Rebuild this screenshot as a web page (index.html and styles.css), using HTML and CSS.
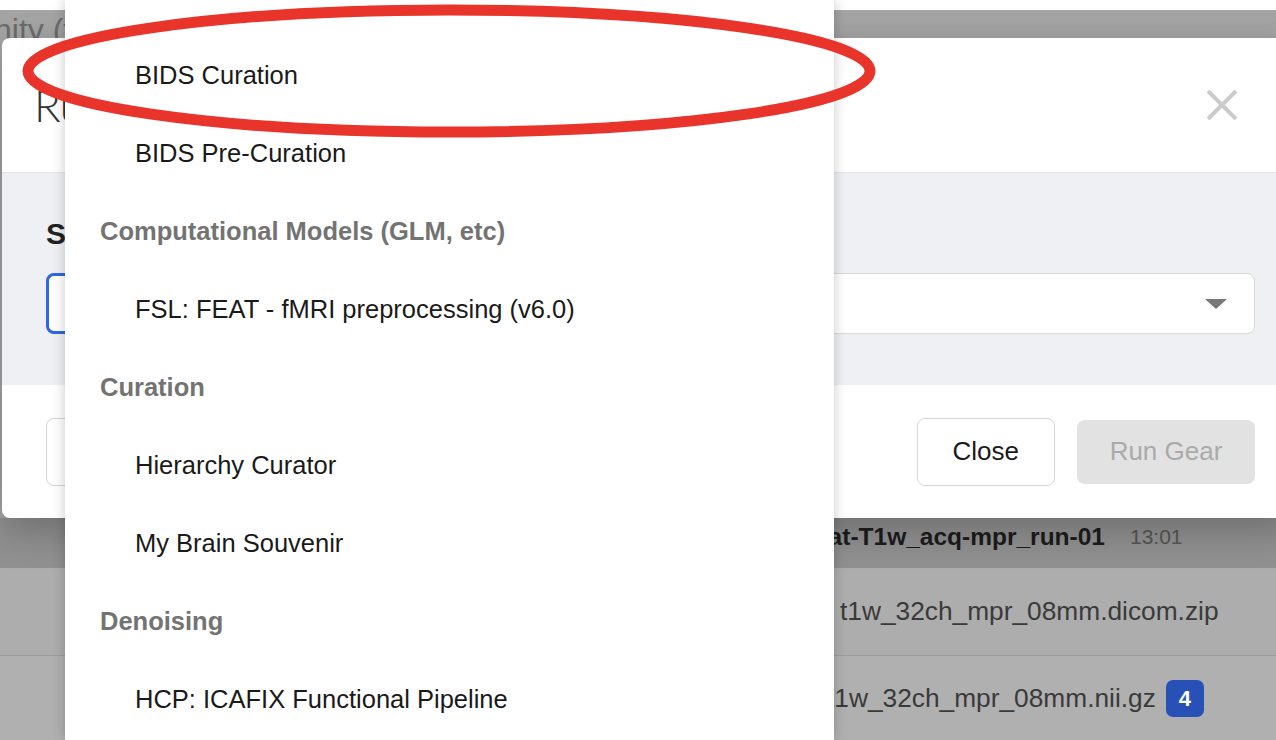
FILE: index.html
```html
<!DOCTYPE html>
<html lang="en">
<head>
  <meta charset="UTF-8" />
  <title>Run Gear</title>
  <link rel="stylesheet" href="styles.css">
</head>
<body>

  <!-- page derrière la modale -->
  <div class="page">
    <h2 class="page-title">Community (t1w)</h2>
    <div class="files">
      <div class="file-row row-acq">
        <span class="acq-name">anat-T1w_acq-mpr_run-01</span>
        <span class="acq-time">13:01</span>
      </div>
      <div class="file-row row-dicom">t1w_32ch_mpr_08mm.dicom.zip</div>
      <div class="file-row row-nifti">
        <span>t1w_32ch_mpr_08mm.nii.gz</span>
        <span class="badge">4</span>
      </div>
    </div>
  </div>

  <div class="modal">
    <div class="modal-header">
      <h3 class="modal-title">Run Gear</h3>
      <button class="modal-close" aria-label="Close">
        <svg width="32" height="30" viewBox="0 0 32 30">
          <path d="M2 1 L30 29 M30 1 L2 29" stroke="#cbcbcb" stroke-width="4" fill="none" />
        </svg>
      </button>
    </div>
    <div class="modal-body">
      <label class="field-label">Select a Gear</label>
      <div class="select">
        <div class="select-search"></div>
        <span class="select-arrow"></span>
      </div>
    </div>
    <div class="modal-footer">
      <button class="btn btn-left">Advanced</button>
      <div class="spacer"></div>
      <button class="btn">Close</button>
      <button class="btn btn-disabled" disabled>Run Gear</button>
    </div>
  </div>

  <ul class="dropdown">
    <li class="opt">BIDS Curation</li>
    <li class="opt">BIDS Pre-Curation</li>
    <li class="group">Computational Models (GLM, etc)</li>
    <li class="opt">FSL: FEAT - fMRI preprocessing (v6.0)</li>
    <li class="group">Curation</li>
    <li class="opt">Hierarchy Curator</li>
    <li class="opt">My Brain Souvenir</li>
    <li class="group">Denoising</li>
    <li class="opt">HCP: ICAFIX Functional Pipeline</li>
  </ul>

  <!-- annotation rouge -->
  <svg class="annotation" width="900" height="150" viewBox="0 0 900 150">
    <ellipse cx="449" cy="71" rx="421" ry="61" fill="none" stroke="#e8342a" stroke-width="11" />
  </svg>

</body>
</html>
```

FILE: styles.css
```css
body {
  margin: 0;
  height: 740px;
  overflow: hidden;
  position: relative;
  background: #ffffff;
  font-family: "Liberation Sans", Arial, sans-serif;
  color: #1a1a1a;
}

/* page grisée derrière */
.page {
  margin-top: 10px;
  height: 730px;
  background: #a5a5a5;
}

.page-title {
  margin: 0 0 0 -118px;
  height: 40px;
  line-height: 40px;
  font-size: 32px;
  font-weight: normal;
  color: #6c6c6c;
  white-space: nowrap;
}

.files {
  margin-top: 468px;
}

.file-row {
  display: flex;
  align-items: center;
  white-space: nowrap;
  font-size: 26.3px;
  color: #3a3a3a;
}

.row-acq {
  height: 50px;
  padding-left: 800px;
  padding-bottom: 12px;
  box-sizing: border-box;
  background: #919191;
}
.acq-name {
  font-size: 24.5px;
  font-weight: bold;
  color: #1c1c1c;
}
.acq-time {
  margin-left: 25px;
  font-size: 21px;
  color: #555555;
}

.row-dicom {
  height: 87px;
  padding-left: 840px;
  background: #adadad;
}

.row-nifti {
  height: 85px;
  padding-left: 827px;
  border-top: 1px solid #9d9d9d;
  background: #b0b0b0;
}

.badge {
  margin-left: 10px;
  width: 38px;
  height: 37px;
  line-height: 37px;
  border-radius: 7px;
  background: #2851b7;
  color: #ffffff;
  font-weight: bold;
  font-size: 22px;
  text-align: center;
}

/* modale */
.modal {
  position: absolute;
  left: 2px;
  top: 38px;
  width: 1297px;
  background: #ffffff;
  border-radius: 8px;
  box-shadow: 0 12px 40px rgba(0, 0, 0, 0.25);
}

.modal-header {
  height: 135px;
  display: flex;
  align-items: center;
  justify-content: space-between;
  padding: 0 61px 0 32px;
  border-bottom: 1px solid #e4e4e4;
  box-sizing: border-box;
}

.modal-title {
  margin: 0;
  font-family: Lato, "Liberation Sans", sans-serif;
  font-weight: 300;
  font-size: 44px;
  color: #333333;
}

.modal-close {
  border: none;
  background: none;
  padding: 0;
  display: flex;
  cursor: pointer;
}

.modal-body {
  height: 212px;
  background: #eef0f3;
  padding: 44px 44px 0;
  box-sizing: border-box;
}

.field-label {
  display: block;
  font-size: 30px;
  font-weight: bold;
  line-height: 34px;
  color: #222222;
  margin-bottom: 22px;
}

.select {
  height: 61px;
  display: flex;
  align-items: center;
  background: #ffffff;
  border: 1px solid #d9d9d9;
  border-radius: 8px;
  box-sizing: border-box;
}

.select-search {
  align-self: stretch;
  width: 700px;
  margin: -1px;
  border: 3px solid #2f66e6;
  border-radius: 8px;
}

.select-arrow {
  margin-left: auto;
  margin-right: 27px;
  border-left: 11px solid transparent;
  border-right: 11px solid transparent;
  border-top: 10px solid #777777;
}

.modal-footer {
  height: 133px;
  display: flex;
  align-items: center;
  gap: 22px;
  padding: 0 44px;
  box-sizing: border-box;
}

.spacer {
  flex: 1;
}

.btn {
  height: 68px;
  padding: 0 35px;
  border: 1.5px solid #d6d6d6;
  border-radius: 8px;
  background: #ffffff;
  font-family: inherit;
  font-size: 26px;
  color: #1a1a1a;
}

.btn-disabled {
  height: 64px;
  width: 178px;
  padding: 0;
  border: none;
  background: #e2e2e2;
  color: #aaaaaa;
}

/* menu déroulant */
.dropdown {
  position: absolute;
  left: 65px;
  top: 0;
  width: 769px;
  height: 740px;
  margin: 0;
  padding: 36px 0 0;
  box-sizing: border-box;
  list-style: none;
  background: #ffffff;
  box-shadow: 0 0 12px rgba(0, 0, 0, 0.22);
}

.dropdown li {
  height: 78px;
  line-height: 78px;
  font-size: 25.5px;
  white-space: nowrap;
}

.opt {
  padding-left: 70px;
  color: #1a1a1a;
}

.group {
  padding-left: 35px;
  color: #737373;
  font-weight: bold;
}

.annotation {
  position: absolute;
  left: 0;
  top: 0;
}
```
